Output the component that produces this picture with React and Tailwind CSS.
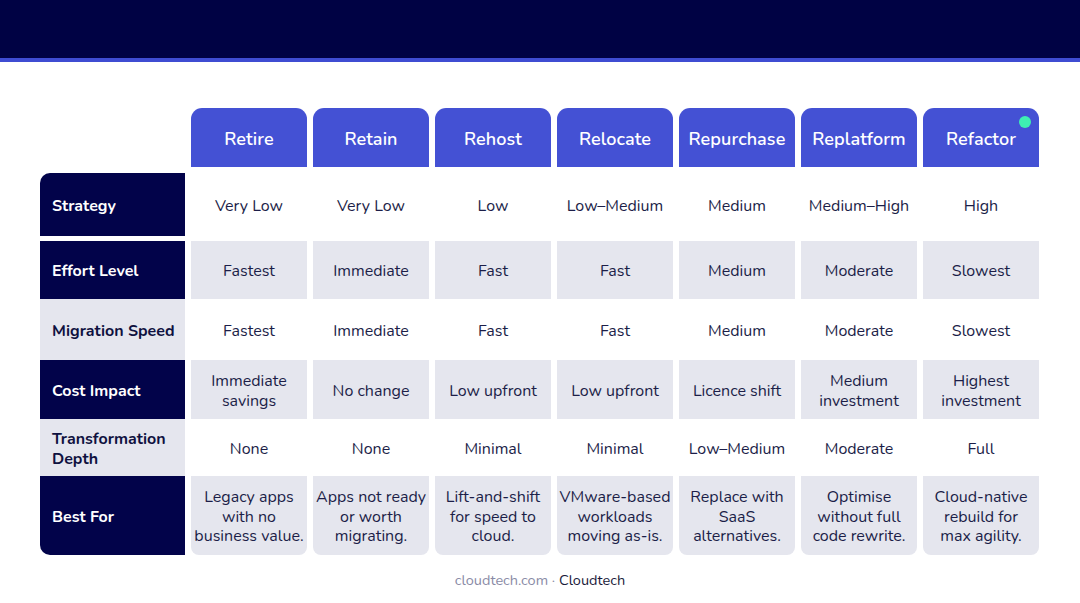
import React from "react";

const cols = ["Retire", "Retain", "Rehost", "Relocate", "Repurchase", "Replatform", "Refactor"];

const rows = [
  { label: "Strategy", dark: true, gray: false, h: "h-[63px]", mt: "mt-[6px]", round: "rounded-tl-[10px]", cells: ["Very Low", "Very Low", "Low", "Low–Medium", "Medium", "Medium–High", "High"] },
  { label: "Effort Level", dark: true, gray: true, h: "h-[58px]", mt: "mt-[5px]", round: "", cells: ["Fastest", "Immediate", "Fast", "Fast", "Medium", "Moderate", "Slowest"] },
  { label: "Migration Speed", dark: false, gray: false, h: "h-[61px]", mt: "", round: "", cells: ["Fastest", "Immediate", "Fast", "Fast", "Medium", "Moderate", "Slowest"] },
  { label: "Cost Impact", dark: true, gray: true, h: "h-[59px]", mt: "", round: "", cells: ["Immediate savings", "No change", "Low upfront", "Low upfront", "Licence shift", "Medium investment", "Highest investment"] },
  { label: "Transformation Depth", dark: false, gray: false, h: "h-[57px]", mt: "", round: "", cells: ["None", "None", "Minimal", "Minimal", "Low–Medium", "Moderate", "Full"] },
  { label: "Best For", dark: true, gray: true, h: "h-[79px]", mt: "", round: "rounded-bl-[10px]", last: true, cells: ["Legacy apps with no business value.", "Apps not ready or worth migrating.", "Lift-and-shift for speed to cloud.", "VMware-based workloads moving as-is.", "Replace with SaaS alternatives.", "Optimise without full code rewrite.", "Cloud-native rebuild for max agility."] },
];

const wraps = {
  "Immediate savings": ["Immediate", "savings"],
  "Medium investment": ["Medium", "investment"],
  "Highest investment": ["Highest", "investment"],
  "Legacy apps with no business value.": ["Legacy apps", "with no", "business value."],
  "Apps not ready or worth migrating.": ["Apps not ready", "or worth", "migrating."],
  "Lift-and-shift for speed to cloud.": ["Lift-and-shift", "for speed to", "cloud."],
  "VMware-based workloads moving as-is.": ["VMware-based", "workloads", "moving as-is."],
  "Replace with SaaS alternatives.": ["Replace with", "SaaS", "alternatives."],
  "Optimise without full code rewrite.": ["Optimise", "without full", "code rewrite."],
  "Cloud-native rebuild for max agility.": ["Cloud-native", "rebuild for", "max agility."],
};

function CellText({ t }) {
  const lines = wraps[t];
  if (!lines) return <span>{t}</span>;
  return (
    <span className="leading-[19.5px]">
      {lines.map((l, i) => (
        <span key={i} className="block">{l}</span>
      ))}
    </span>
  );
}

export default function App() {
  return (
    <div
      className="w-[1080px] h-[603px] bg-white overflow-hidden flex flex-col"
      style={{ fontFamily: "Nunito, Lato, 'Noto Sans', sans-serif" }}
    >
      <div className="h-[58px] bg-[#000244]" />
      <div className="h-[4px] bg-[#3f4cd2]" />
      <div className="pl-[40px] pt-[46px] flex flex-col">
        <div className="grid grid-cols-[145px_repeat(7,116px)] gap-x-[6px] h-[59px]">
          <div />
          {cols.map((c, i) => (
            <div
              key={c}
              className="relative bg-[#4451d4] rounded-t-[11px] flex items-center justify-center pt-[3px] text-white text-[18px] font-semibold tracking-[0.1px]"
            >
              {c}
              {i === 6 && (
                <span className="absolute right-[8px] top-[8px] w-[12px] h-[12px] rounded-full bg-[#3ef0b2]" />
              )}
            </div>
          ))}
        </div>
        {rows.map((r) => (
          <div
            key={r.label}
            className={`grid grid-cols-[145px_repeat(7,116px)] gap-x-[6px] ${r.h} ${r.mt}`}
          >
            <div
              className={`flex items-center pl-[12px] pr-[6px] pt-[4px] text-[16px] font-bold leading-[19.5px] ${r.round} ${
                r.dark ? "bg-[#02034a] text-white" : "bg-[#e5e6ee] text-[#0f1140]"
              }`}
            >
              {r.label}
            </div>
            {r.cells.map((c, i) => (
              <div
                key={i}
                className={`flex items-center justify-center text-center pt-[4px] text-[16px] text-[#1c1e48] leading-[19.5px] ${
                  r.gray ? "bg-[#e5e6ee]" : "bg-white"
                } ${r.last ? "rounded-b-[8px]" : ""}`}
              >
                <CellText t={c} />
              </div>
            ))}
          </div>
        ))}
      </div>
      <div className="mt-[16px] text-center text-[14.5px] leading-[18px]">
        <span className="text-[#8a8ba6]">cloudtech.com · </span>
        <span className="text-[#1a1b3a]">Cloudtech</span>
      </div>
    </div>
  );
}
